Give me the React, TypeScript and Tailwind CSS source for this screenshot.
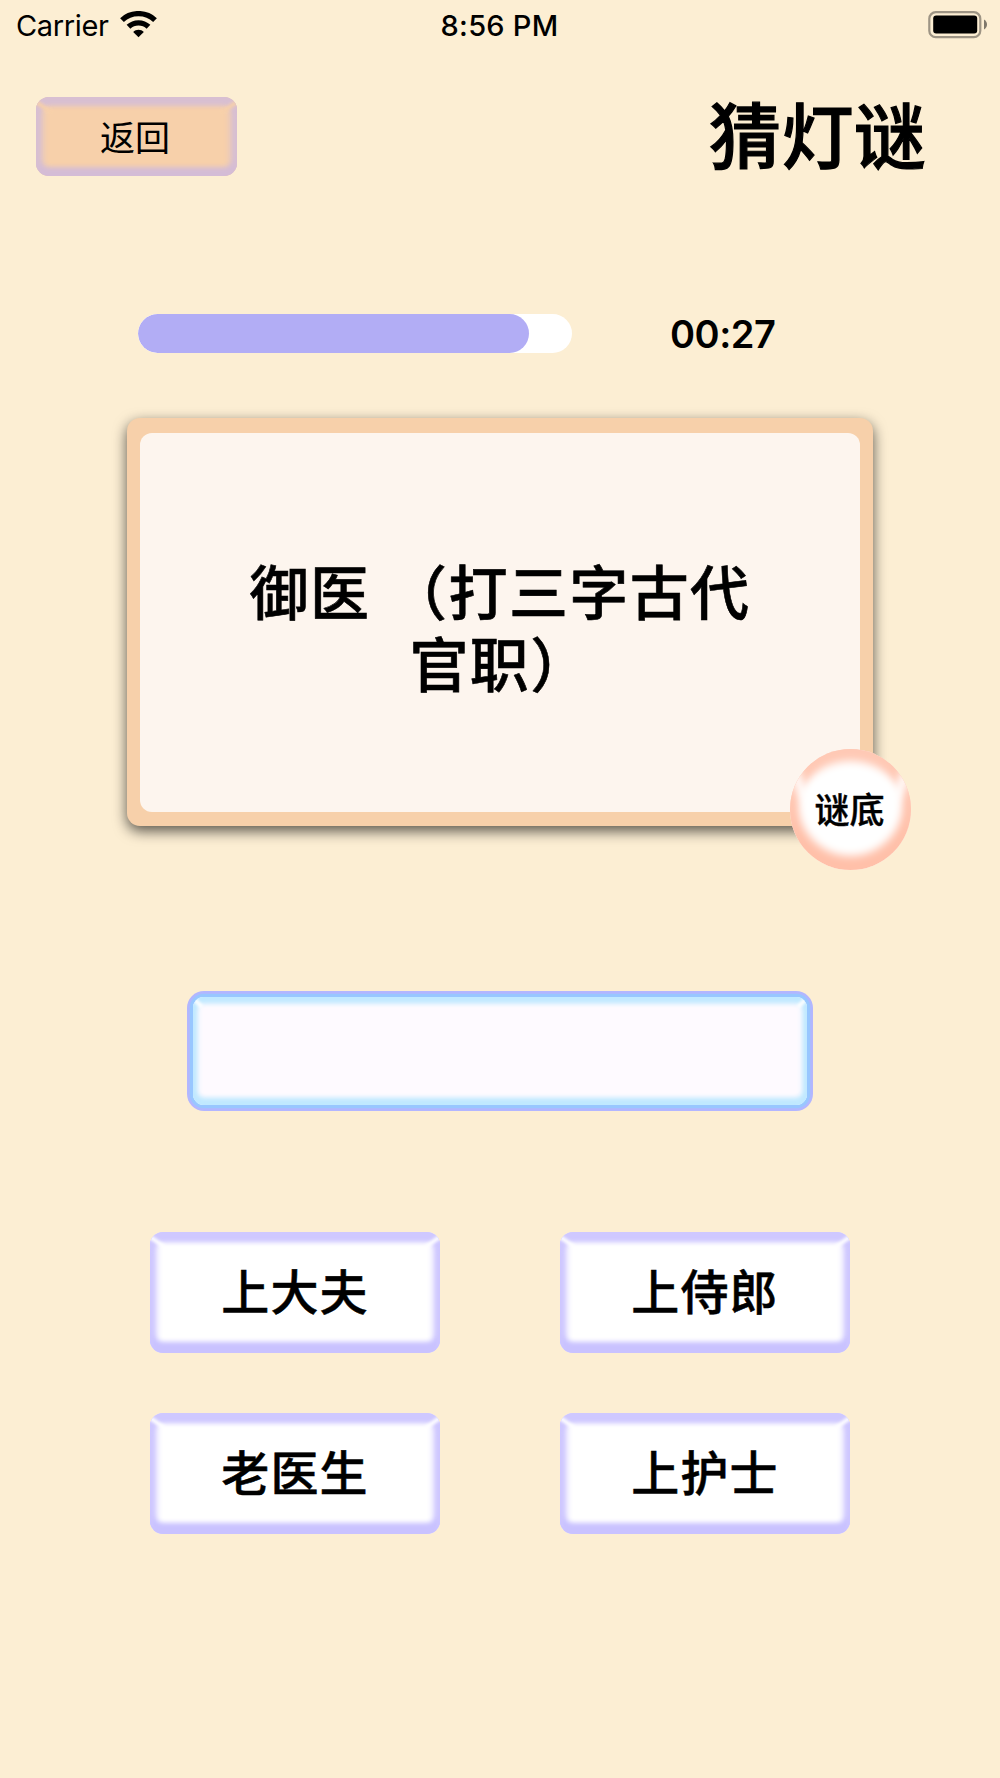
const OPTIONS = ['上大夫', '上侍郎', '老医生', '上护士']

const TOTAL_SECONDS = 30
const SECONDS_LEFT = 27

function StatusBar() {
  return (
    <header className="flex h-[50px] w-full items-center justify-between pl-4 pr-[13px] font-['Inter',sans-serif] text-[29px] leading-none">
      <div className="flex w-[299px] items-center gap-[11px]">
        <span className="tracking-[-0.35px]">Carrier</span>
        <svg width="37" height="28" viewBox="0 0 37 28" fill="none" stroke="#000" strokeWidth="5.4">
          <path d="M2 9.1C11 .5 26 .5 35 9.1" />
          <path d="M8.5 15.8C14 10.5 23 10.5 28.5 15.8" />
          <path d="M13.2 21C16 17.9 21 17.9 23.8 21L18.5 26.3Z" fill="#000" stroke="none" />
        </svg>
      </div>
      <span className="pr-[3px] font-medium tracking-[0.25px]">8:56 PM</span>
      <div className="flex w-[300px] justify-end">
        <svg width="60" height="28" viewBox="0 0 60 28">
          <rect x="2.3" y="1.2" width="51" height="25" rx="6.5" fill="none" stroke="#9d9484" strokeWidth="2.2" />
          <rect x="6.2" y="4.5" width="44" height="18" rx="3" />
          <path d="M57 8.5C61 11 61 16 57 18.5Z" fill="#7e776a" />
        </svg>
      </div>
    </header>
  )
}

/** Light streaks where the top and side bevels meet */
function Glints({ className }: { className: string }) {
  return (
    <>
      <span className={`absolute left-[-4px] top-[7px] h-[4px] w-[20px] rotate-[35deg] blur-[1.5px] ${className}`} />
      <span className={`absolute right-[-4px] top-[7px] h-[4px] w-[20px] -rotate-[35deg] blur-[1.5px] ${className}`} />
    </>
  )
}

function OptionButton({ label }: { label: string }) {
  return (
    <button className="relative flex h-[121px] w-[290px] items-center justify-center overflow-hidden rounded-[13px] bg-white pb-[7px] text-5xl font-medium tracking-[1.1px] shadow-[inset_0_8px_5px_2px_#cfc8ff,inset_0_-9px_5px_2px_#c9c2ff,inset_0_0_6px_7px_#d6d0ff] [-webkit-text-stroke:0.5px_#000]">
      <Glints className="bg-white" />
      {label}
    </button>
  )
}

export default function App() {
  return (
    <main className="flex h-[1778px] w-[1000px] flex-col items-center bg-[#fceed3] font-['Noto_Sans_CJK_SC',sans-serif] leading-none text-black">
      <StatusBar />

      <div className="mt-[47px] flex h-[79px] w-full items-center justify-between pl-9 pr-[74px]">
        <button className="relative flex h-[79px] w-[201px] items-center justify-center overflow-hidden rounded-[13px] bg-[#f7d0aa] pb-[2px] pr-[3px] text-[35px] font-normal shadow-[inset_0_6px_5px_2px_#d8bfd2,inset_0_-6px_5px_2px_#d4bcd6,inset_0_0_6px_7px_#dcc3cc]">
          <Glints className="bg-[#f7d0aa]" />
          返回
        </button>
        <h1 className="pb-[9px] text-[72px] font-medium tracking-[0.3px] [-webkit-text-stroke:1.2px_#000]">猜灯谜</h1>
      </div>

      <div className="mt-[138px] flex h-[39px] w-full items-center pl-[138px]">
        <div className="h-full w-[434px] overflow-hidden rounded-full bg-white">
          <div
            className="h-full rounded-full bg-[#b2adf5]"
            style={{ width: `${(SECONDS_LEFT / TOTAL_SECONDS) * 100}%` }}
          />
        </div>
        <span className="ml-[98px] font-['Inter',sans-serif] text-[38px] font-semibold tracking-[-0.5px]">00:27</span>
      </div>

      <section className="relative mt-[65px] h-[408px] w-[746px] rounded-[13px] bg-[#f7d0aa] px-[13px] pb-[14px] pt-[15px] shadow-[0_5px_14px_rgba(0,0,0,0.65)]">
        <div className="flex h-full items-center justify-center rounded-[12px] bg-[#fdf5ee] pt-[18px] text-center font-['Liberation_Sans','Noto_Sans_CJK_SC',sans-serif] text-[59px] font-medium leading-[71.5px] tracking-[1.4px] [-webkit-text-stroke:0.6px_#000]">
          <p className="whitespace-pre">
            御医 （打三字古代
            <br />
            官职）
          </p>
        </div>
        <button className="absolute left-[663px] top-[331px] flex h-[121px] w-[121px] items-center justify-center overflow-hidden rounded-full bg-white text-[35px] font-medium shadow-[inset_0_11px_9px_1px_#ffc9b5,inset_0_-6px_9px_8px_#ffc0a9]">
          <span className="absolute left-[-8px] top-[30px] h-[10px] w-[34px] rotate-[65deg] bg-white blur-[4px]" />
          <span className="absolute right-[-8px] top-[30px] h-[10px] w-[34px] -rotate-[65deg] bg-white blur-[4px]" />
          <span className="relative pb-[4px] pr-[2px] [-webkit-text-stroke:0.4px_#000]">谜底</span>
        </button>
      </section>

      <div className="mt-[165px] h-[120px] w-[626px] rounded-[17px] bg-[#b3b6ff] p-[3px]">
        <div className="h-full rounded-[14px] bg-[#98c7ff] p-[3px] shadow-[0_0_2px_#98c7ff]">
          <div className="relative h-full overflow-hidden rounded-[11px] bg-[#fefaff] shadow-[inset_0_4px_5px_2px_#c0e9ff,inset_0_-5px_5px_2px_#c0e9ff,inset_0_0_6px_4px_#cfedff]">
            <span className="absolute left-[-1px] top-[4px] h-[4px] w-[12px] rotate-45 bg-white blur-[1.5px]" />
            <span className="absolute right-[-1px] top-[4px] h-[4px] w-[12px] -rotate-45 bg-white blur-[1.5px]" />
          </div>
        </div>
      </div>

      <div className="mt-[121px] grid grid-cols-2 gap-x-[120px] gap-y-[60px]">
        {OPTIONS.map((label) => (
          <OptionButton key={label} label={label} />
        ))}
      </div>
    </main>
  )
}
